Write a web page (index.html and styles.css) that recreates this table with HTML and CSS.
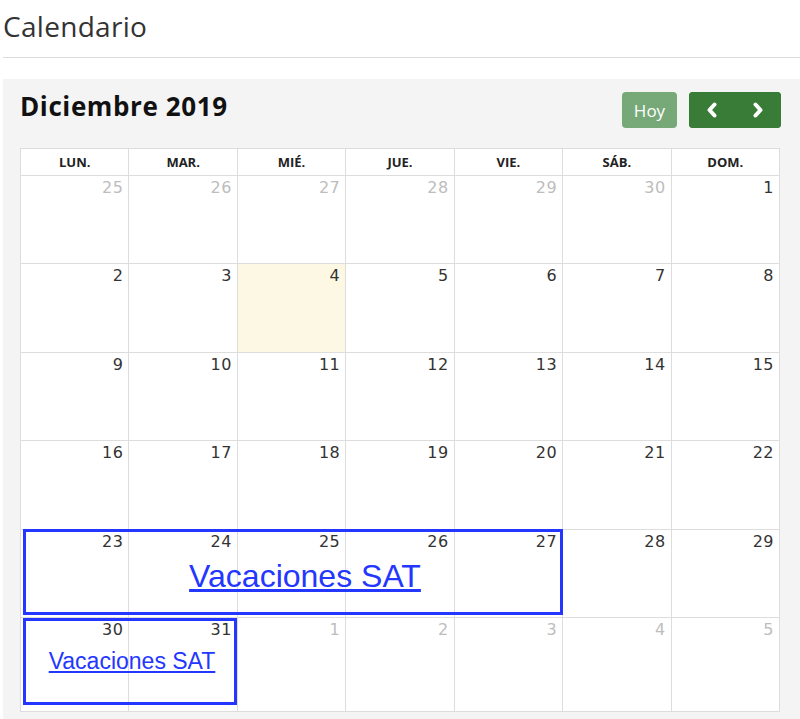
FILE: index.html
```html
<!DOCTYPE html>
<html lang="es">
<head>
<meta charset="utf-8">
<title>Calendario</title>
<link rel="stylesheet" href="styles.css">
</head>
<body>
<div class="page">
  <h1 class="page-title">Calendario</h1>
  <div class="rule"></div>
  <section class="panel">
    <div class="toolbar">
      <h2 class="month">Diciembre 2019</h2>
      <div class="controls">
        <button class="btn btn-today" type="button">Hoy</button>
        <div class="btn-group">
          <button class="btn btn-nav" type="button" aria-label="Anterior">
            <svg width="12" height="16" viewBox="0 0 12 16"><polyline points="8.5,2.5 3.5,8 8.5,13.5" fill="none" stroke="#fff" stroke-width="4" stroke-linecap="round" stroke-linejoin="round"/></svg>
          </button>
          <button class="btn btn-nav" type="button" aria-label="Siguiente">
            <svg width="12" height="16" viewBox="0 0 12 16"><polyline points="3.5,2.5 8.5,8 3.5,13.5" fill="none" stroke="#fff" stroke-width="4" stroke-linecap="round" stroke-linejoin="round"/></svg>
          </button>
        </div>
      </div>
    </div>
    <div class="cal">
      <div class="cal-head">
        <div class="hcell">LUN.</div>
        <div class="hcell">MAR.</div>
        <div class="hcell">MIÉ.</div>
        <div class="hcell">JUE.</div>
        <div class="hcell">VIE.</div>
        <div class="hcell">SÁB.</div>
        <div class="hcell">DOM.</div>
      </div>
      <div class="week">
        <div class="day other">25</div>
        <div class="day other">26</div>
        <div class="day other">27</div>
        <div class="day other">28</div>
        <div class="day other">29</div>
        <div class="day other">30</div>
        <div class="day">1</div>
      </div>
      <div class="week">
        <div class="day">2</div>
        <div class="day">3</div>
        <div class="day today">4</div>
        <div class="day">5</div>
        <div class="day">6</div>
        <div class="day">7</div>
        <div class="day">8</div>
      </div>
      <div class="week">
        <div class="day">9</div>
        <div class="day">10</div>
        <div class="day">11</div>
        <div class="day">12</div>
        <div class="day">13</div>
        <div class="day">14</div>
        <div class="day">15</div>
      </div>
      <div class="week">
        <div class="day">16</div>
        <div class="day">17</div>
        <div class="day">18</div>
        <div class="day">19</div>
        <div class="day">20</div>
        <div class="day">21</div>
        <div class="day">22</div>
      </div>
      <div class="week">
        <div class="day">23</div>
        <div class="day">24</div>
        <div class="day">25</div>
        <div class="day">26</div>
        <div class="day">27</div>
        <div class="day">28</div>
        <div class="day">29</div>
        <div class="event event-long"><a href="#">Vacaciones SAT</a></div>
      </div>
      <div class="week week-last">
        <div class="day">30</div>
        <div class="day">31</div>
        <div class="day other">1</div>
        <div class="day other">2</div>
        <div class="day other">3</div>
        <div class="day other">4</div>
        <div class="day other">5</div>
        <div class="event event-short"><a href="#">Vacaciones SAT</a></div>
      </div>
    </div>
  </section>
</div>
</body>
</html>
```

FILE: styles.css
```css
* { box-sizing: border-box; }

html, body {
  margin: 0;
  padding: 0;
  background: #ffffff;
}

body {
  font-family: "Open Sans", Lato, "Liberation Sans", sans-serif;
  color: #222;
  overflow: hidden;
}

.page {
  padding-left: 3px;
}

.page-title {
  margin: 0;
  padding-top: 7px;
  font-family: "Open Sans", sans-serif;
  font-size: 28px;
  font-weight: 400;
  line-height: 38px;
  color: #333;
  letter-spacing: 0.3px;
}

.rule {
  margin-top: 12px;
  height: 1px;
  background: #dcdcdc;
}

.panel {
  margin-top: 21px;
  background: #f4f4f4;
  padding: 13px 20px 12px 17px;
  min-height: 660px;
}

.toolbar {
  display: flex;
  justify-content: space-between;
  align-items: flex-start;
  height: 56px;
}

.month {
  margin: -4px 0 0 0;
  font-family: "Open Sans", sans-serif;
  font-size: 26px;
  font-weight: 700;
  color: #111;
  line-height: normal;
  letter-spacing: 0.6px;
}

.controls {
  display: flex;
  gap: 12px;
  margin-right: -1px;
}

.btn {
  border: 0;
  margin: 0;
  height: 36px;
  padding: 0;
  font-family: "Open Sans", sans-serif;
  color: #fff;
  cursor: pointer;
}

.btn-today {
  width: 55px;
  border-radius: 4px;
  background: #77a878;
  font-size: 17px;
}

.btn-group {
  display: flex;
  border-radius: 4px;
  overflow: hidden;
  background: #387c37;
}

.btn-nav {
  width: 46px;
  background: #387c37;
  display: flex;
  align-items: center;
  justify-content: center;
}

.btn-nav svg { display: block; }

.cal {
  background: #fff;
  border-top: 1px solid #dddddd;
  border-left: 1px solid #dddddd;
  width: 760px;
}

.cal-head {
  display: grid;
  grid-template-columns: repeat(7, 1fr);
}

.hcell {
  height: 27px;
  line-height: 26px;
  text-align: center;
  font-family: "Open Sans", sans-serif;
  font-weight: 700;
  font-size: 13px;
  color: #222;
  border-right: 1px solid #dddddd;
  border-bottom: 1px solid #dddddd;
}

.week {
  position: relative;
  display: grid;
  grid-template-columns: repeat(7, 1fr);
  height: 88.4px;
}

.week-last {
  height: 94px;
}

.day {
  border-right: 1px solid #dddddd;
  border-bottom: 1px solid #dddddd;
  text-align: right;
  padding: 2px 5px 0 0;
  font-family: "DejaVu Sans", Verdana, sans-serif;
  font-size: 16px;
  color: #333;
  letter-spacing: 0.5px;
}

.day.other {
  color: #bdbdbd;
}

.day.today {
  background: #fcf8e3;
}

.event {
  position: absolute;
  left: 2px;
  border: 3px solid #2437ff;
  text-align: center;
  font-family: "Liberation Sans", Arial, sans-serif;
  line-height: normal;
}

.event a {
  color: #2437ff;
  text-decoration: underline;
}

.event-long {
  top: -1px;
  width: 540px;
  height: 86px;
  padding: 26px 0 0 24px;
  font-size: 32px;
}

.event-short {
  top: 0;
  width: 214px;
  height: 87px;
  padding: 27px 0 0 4px;
  font-size: 23px;
}
```
